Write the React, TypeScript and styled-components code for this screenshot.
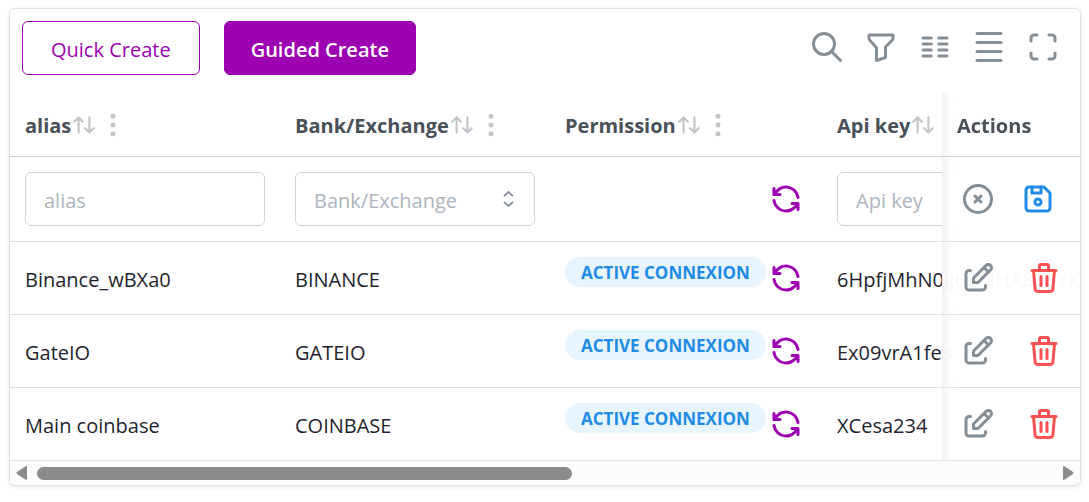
import React from 'react';
import styled, { createGlobalStyle } from 'styled-components';
import {
  TbSearch, TbFilter, TbColumns, TbBaselineDensitySmall, TbMaximize, TbArrowsSort,
  TbDotsVertical, TbCircleX, TbDeviceFloppy, TbEdit, TbTrash, TbRefresh,
} from 'react-icons/tb';

const font = '"Segoe UI", "Open Sans", "Noto Sans", sans-serif';

const GlobalStyle = createGlobalStyle`
  * { box-sizing: border-box; }
  body { margin: 0; background: #fff; color: #1f1f2e; font-family: ${font}; font-size: 20px; }
  button, input, select { font: inherit; }
`;

const Card = styled.main`
  margin: 8px 8px 16px 9px;
  border: 1px solid #dee2e6;
  border-radius: 6px;
  overflow: hidden;
  background: #fff;
  box-shadow: 0 1px 4px rgba(0, 0, 0, 0.1);
`;

const Toolbar = styled.header`
  display: flex;
  justify-content: space-between;
  align-items: flex-start;
  height: 84px;
  padding: 12px 19px 0 12px;
`;

const Group = styled.div<{ $gap: number }>`
  display: flex;
  align-items: center;
  gap: ${(p) => p.$gap}px;
`;

const ToolGroup = styled(Group)`
  padding-top: 8px;
`;

const RowActions = styled(Group)`
  padding-left: 3px;
`;

const CreateButton = styled.button<{ $filled?: boolean }>`
  height: 54px;
  padding: 2px ${(p) => (p.$filled ? 26 : 28)}px 0;
  border: 1px solid #9c00b0;
  border-radius: 6px;
  background: ${(p) => (p.$filled ? '#9c00b0' : '#fff')};
  color: ${(p) => (p.$filled ? '#fff' : '#9c00b0')};
  font-weight: ${(p) => (p.$filled ? 600 : 500)};
  white-space: nowrap;
  cursor: pointer;
`;

const IconButton = styled.button<{ $color?: string; $size?: number }>`
  display: inline-flex;
  flex: none;
  align-items: center;
  justify-content: center;
  width: ${(p) => p.$size ?? 36}px;
  height: ${(p) => p.$size ?? 36}px;
  padding: 0;
  border: 0;
  background: transparent;
  color: ${(p) => p.$color ?? '#868e96'};
  cursor: pointer;
  svg { flex: none; width: ${(p) => p.$size ?? 36}px; height: ${(p) => p.$size ?? 36}px; }
`;

const Scroller = styled.div`
  overflow: hidden;
`;

const Table = styled.table`
  width: 1960px;
  table-layout: fixed;
  border-collapse: separate;
  border-spacing: 0;
`;

const HeadCell = styled.th`
  height: 64px;
  padding: 0 15px;
  border-bottom: 1px solid #ced4da;
  color: #495057;
  font-weight: 700;
  text-align: left;
  white-space: nowrap;
`;

const HeadText = styled.span`
  display: block;
  padding-top: 2px;
`;

const Cell = styled.td<{ $tall?: boolean }>`
  height: ${(p) => (p.$tall ? 85 : 73)}px;
  padding: 0 15px;
  border-bottom: 1px solid #dee2e6;
  white-space: nowrap;
`;

const TextCell = styled(Cell)`
  padding-top: 2px;
`;

const pinned = `
  position: sticky;
  right: 0;
  background: rgba(255, 255, 255, 0.97);
  box-shadow: inset 12px 0 12px -10px rgba(0, 0, 0, 0.08);
`;
const PinnedHead = styled(HeadCell)`${pinned}`;
const PinnedCell = styled(Cell)`${pinned}`;

const Field = styled.input`
  display: block;
  width: 100%;
  height: 54px;
  padding: 2px 18px 0;
  border: 1px solid #ced4da;
  border-radius: 6px;
  background: #fff;
  &::placeholder { color: #adb5bd; opacity: 1; }
`;

const SelectWrap = styled.div`
  display: grid;
  align-items: center;
  > * { grid-area: 1 / 1; }
  > svg { justify-self: end; margin-right: 21px; color: #868e96; pointer-events: none; }
`;

const Select = styled.select`
  width: 100%;
  height: 54px;
  padding: 2px 18px 0;
  border: 1px solid #ced4da;
  border-radius: 6px;
  background: #fff;
  color: #adb5bd;
  appearance: none;
`;

const Status = styled.div`
  display: flex;
  align-items: center;
  justify-content: space-between;
  margin-right: 3px;
`;

const Badge = styled.span`
  height: 30px;
  margin-bottom: 12px;
  padding: 0 16px;
  border-radius: 15px;
  background: #e7f5ff;
  color: #228be6;
  font-size: 17px;
  font-weight: 700;
  line-height: 32px;
`;

const ScrollTrack = styled.div`
  display: flex;
  align-items: center;
  gap: 10px;
  height: 24px;
  padding: 0 6px;
  background: #fcfcfc;
`;

const Rail = styled.div`
  flex: 1;
  margin-right: 6px;
`;

const Thumb = styled.div`
  width: 53%;
  height: 13px;
  border-radius: 7px;
  background: #8b8b8b;
`;

const Arrow = ({ flip }: { flip?: boolean }) => (
  <svg width="11" height="14" viewBox="0 0 11 14" fill="#8b8b8b" aria-hidden="true">
    <path d={flip ? 'M0 1Q0 0 1 0L10 6Q11 7 10 8L1 14Q0 14 0 13Z' : 'M11 1Q11 0 10 0L1 6Q0 7 1 8L10 14Q11 14 11 13Z'} />
  </svg>
);

const SelectorIcon = () => (
  <svg width="11" height="18" viewBox="0 0 11 18" fill="none" stroke="currentColor" strokeWidth="1.8" aria-hidden="true">
    <path d="M1 6.200L5.500 1.900L10 6.200M1 11.800L5.500 16.100L10 11.800" />
  </svg>
);

const HeadLabel = ({ text }: { text: string }) => (
  <Group $gap={1}>
    <Group $gap={0}>
      <HeadText>{text}</HeadText>
      <IconButton $size={26} $color="#c2c6ca" aria-label={`Sort by ${text}`}><TbArrowsSort /></IconButton>
    </Group>
    <IconButton $size={30} $color="#c2c6ca" aria-label={`${text} column actions`}><TbDotsVertical fill="currentColor" /></IconButton>
  </Group>
);

const Refresh = () => (
  <IconButton $color="#9c00b0" aria-label="Refresh"><TbRefresh /></IconButton>
);

const accounts = [
  { alias: 'Binance_wBXa0', bank: 'BINANCE', key: '6HpfjMhN0Jj6ZMHA8ZEYK' },
  { alias: 'GateIO', bank: 'GATEIO', key: 'Ex09vrA1fes' },
  { alias: 'Main coinbase', bank: 'COINBASE', key: 'XCesa234' },
];

export default function App() {
  return (
    <>
      <GlobalStyle />
      <Card>
        <Toolbar>
          <Group $gap={24}>
            <CreateButton>Quick Create</CreateButton>
            <CreateButton $filled>Guided Create</CreateButton>
          </Group>
          <ToolGroup $gap={18}>
            <IconButton aria-label="Search"><TbSearch /></IconButton>
            <IconButton aria-label="Filter"><TbFilter /></IconButton>
            <IconButton aria-label="Columns"><TbColumns /></IconButton>
            <IconButton aria-label="Density"><TbBaselineDensitySmall /></IconButton>
            <IconButton aria-label="Full screen"><TbMaximize /></IconButton>
          </ToolGroup>
        </Toolbar>
        <Scroller>
          <Table>
            <colgroup>
              <col style={{ width: 270 }} />
              <col style={{ width: 270 }} />
              <col style={{ width: 272 }} />
              <col />
              <col style={{ width: 138 }} />
            </colgroup>
            <thead>
              <tr>
                <HeadCell><HeadLabel text="alias" /></HeadCell>
                <HeadCell><HeadLabel text="Bank/Exchange" /></HeadCell>
                <HeadCell><HeadLabel text="Permission" /></HeadCell>
                <HeadCell><HeadLabel text="Api key" /></HeadCell>
                <PinnedHead><HeadText>Actions</HeadText></PinnedHead>
              </tr>
            </thead>
            <tbody>
              <tr>
                <Cell $tall><Field placeholder="alias" aria-label="alias" /></Cell>
                <Cell $tall>
                  <SelectWrap>
                    <Select aria-label="Bank/Exchange"><option>Bank/Exchange</option></Select>
                    <SelectorIcon />
                  </SelectWrap>
                </Cell>
                <Cell $tall><Status><span /><Refresh /></Status></Cell>
                <Cell $tall><Field placeholder="Api key" aria-label="Api key" /></Cell>
                <PinnedCell $tall>
                  <RowActions $gap={24}>
                    <IconButton aria-label="Cancel"><TbCircleX /></IconButton>
                    <IconButton $color="#228be6" aria-label="Save"><TbDeviceFloppy /></IconButton>
                  </RowActions>
                </PinnedCell>
              </tr>
              {accounts.map((a) => (
                <tr key={a.alias}>
                  <TextCell>{a.alias}</TextCell>
                  <TextCell>{a.bank}</TextCell>
                  <Cell><Status><Badge>ACTIVE CONNEXION</Badge><Refresh /></Status></Cell>
                  <TextCell>{a.key}</TextCell>
                  <PinnedCell>
                    <RowActions $gap={30}>
                      <IconButton aria-label={`Edit ${a.alias}`}><TbEdit /></IconButton>
                      <IconButton $color="#fa5252" aria-label={`Delete ${a.alias}`}><TbTrash /></IconButton>
                    </RowActions>
                  </PinnedCell>
                </tr>
              ))}
            </tbody>
          </Table>
        </Scroller>
        <ScrollTrack>
          <Arrow />
          <Rail><Thumb /></Rail>
          <Arrow flip />
        </ScrollTrack>
      </Card>
    </>
  );
}
